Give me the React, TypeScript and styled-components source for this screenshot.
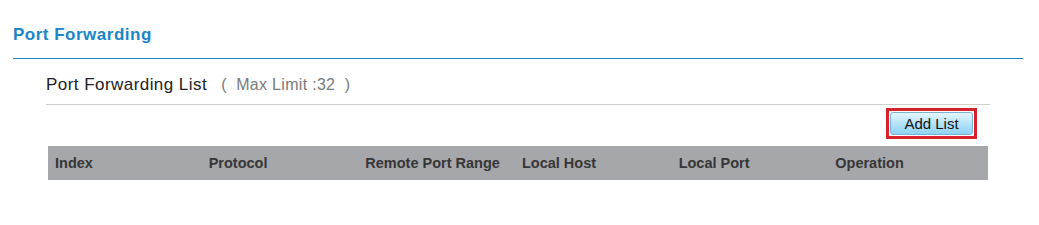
import React from "react";
import styled, { createGlobalStyle } from "styled-components";

const GlobalStyle = createGlobalStyle`
    body {
        margin: 0;
        background: #fff;
        font-family: "Liberation Sans", Arial, sans-serif;
    }
`;

const columns = ["Index", "Protocol", "Remote Port Range", "Local Host", "Local Port", "Operation"];

export default () => {
    return (<StyledPage>
        <GlobalStyle />
        <StyledTitle>Port Forwarding</StyledTitle>
        <StyledSection>
            <StyledSubTitle>
                Port Forwarding List
                <span className="limit">(&nbsp; Max Limit :32 &nbsp;)</span>
            </StyledSubTitle>
            <StyledToolbar>
                <StyledHighlight>
                    <StyledButton type="button">Add List</StyledButton>
                </StyledHighlight>
            </StyledToolbar>
            <StyledTable>
                <thead>
                    <tr>
                        {columns.map(c => <th key={c}>{c}</th>)}
                    </tr>
                </thead>
            </StyledTable>
        </StyledSection>
    </StyledPage>)
}

const StyledPage = styled.div`
    padding: 0 16px 0 13px;
`

const StyledTitle = styled.h1`
    margin: 0;
    padding: 25px 0 13px;
    font-size: 17px;
    line-height: 20px;
    letter-spacing: 0.5px;
    font-weight: bold;
    color: #1a86c8;
    border-bottom: 1px solid #1a86c8;
`

const StyledSection = styled.div`
    margin: 0 33px;
`

const StyledSubTitle = styled.div`
    padding: 16px 0 9px 0;
    font-size: 17px;
    line-height: 20px;
    letter-spacing: 0.45px;
    color: #222;
    border-bottom: 1px solid #cfcfcf;
    .limit{
        margin-left: 14px;
        font-size: 16px;
        letter-spacing: 0.3px;
        color: #7a7a7a;
    }
`

const StyledToolbar = styled.div`
    display: flex;
    justify-content: flex-end;
    padding: 3px 13px 0 0;
    margin-bottom: 7px;
`

const StyledHighlight = styled.div`
    border: 3px solid #d6202b;
    padding: 1px;
    display: flex;
`

const StyledButton = styled.button`
    width: 83px;
    height: 23px;
    margin: 0;
    padding: 0;
    border: 1px solid #79b4d6;
    border-radius: 3px;
    background: linear-gradient(to bottom, #e6f6fe 0%, #b4e3fa 50%, #8fd2f3 100%);
    font-family: "Liberation Sans", Arial, sans-serif;
    font-size: 15px;
    color: #111;
`

const StyledTable = styled.table`
    width: 940px;
    margin: 0 2px;
    border-collapse: collapse;
    table-layout: fixed;
    th{
        height: 34px;
        padding: 0 0 0 4px;
        background: #a6a7ab;
        text-align: left;
        font-size: 14.5px;
        font-weight: bold;
        color: #363636;
    }
    th:first-child{
        padding-left: 7px;
    }
`
